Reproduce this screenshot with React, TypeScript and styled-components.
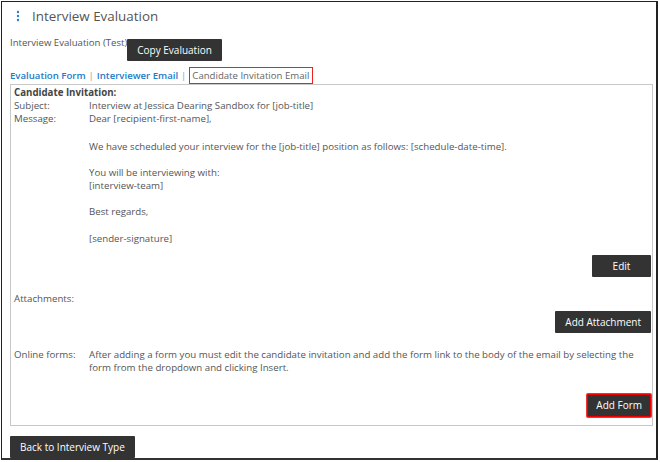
import React from "react";
import styled, { createGlobalStyle } from "styled-components";

const Global = createGlobalStyle`
  html, body { margin: 0; padding: 0; background: #fff; }
  body { font-family: "Open Sans", "Noto Sans", Arial, sans-serif; color: #555; }
  * { box-sizing: border-box; }
`;

const Frame = styled.div`
  margin: 1px 0 0 1px;
  width: 657px;
  height: 459px;
  border: 1px solid #222;
  border-right: 2px solid #222;
  border-bottom: 2px solid #333;
  padding: 0 3px 0 8px;
  display: flex;
  flex-direction: column;
`;

const Header = styled.div`
  display: flex;
  align-items: center;
  height: 30px;
  gap: 12px;
  padding-left: 6px;
  padding-bottom: 2px;
`;

const Title = styled.h1`
  margin: 0;
  font-size: 13.4px;
  font-weight: 400;
  color: #555;
`;

const SubRow = styled.div`
  display: flex;
  align-items: flex-start;
  height: 35px;
  padding-top: 4px;
`;

const SubText = styled.span`
  font-size: 9.6px;
  color: #555;
`;

const DarkButton = styled.button<{ $w?: number; $red?: boolean; $mt?: number }>`
  background: #333;
  color: #fff;
  border: ${(p) => (p.$red ? "1px solid #e00" : "none")};
  box-shadow: ${(p) => (p.$red ? "0 0 0 1px #e33" : "none")};
  border-radius: 1px;
  font-family: inherit;
  font-size: 10px;
  height: ${(p) => (p.$red ? 23 : 22)}px;
  padding: 0 ${(p) => (p.$red ? 8 : 10)}px;
  cursor: pointer;
  ${(p) => (p.$w ? `width: ${p.$w}px;` : "")}
  ${(p) => (p.$mt !== undefined ? `margin-top: ${p.$mt}px;` : "")}
`;

const Tabs = styled.div`
  display: flex;
  align-items: center;
  height: 17px;
  font-size: 9.6px;
`;

const TabLink = styled.a`
  color: #1b7bc7;
  font-weight: 600;
  text-decoration: none;
`;

const Sep = styled.span`
  color: #999;
  margin: 0 3px;
`;

const ActiveTab = styled.span`
  border: 1px solid #e22;
  padding: 0 3px 0 2px;
  color: #666;
  height: 17px;
  line-height: 15px;
`;

const Panel = styled.div`
  border: 1px solid #c8c8c8;
  height: 344px;
  padding: 1px 1px 0 3px;
  font-size: 9.7px;
  line-height: 13px;
  color: #555;
  display: flex;
  flex-direction: column;
`;

const Heading = styled.div`
  font-weight: 700;
  color: #444;
`;

const Row = styled.div<{ $mt?: number }>`
  display: grid;
  grid-template-columns: 75px 1fr;
  margin-top: ${(p) => p.$mt ?? 0}px;
`;

const Value = styled.div`
  color: #555;
`;

const Para = styled.p<{ $gap?: number }>`
  margin: 0;
  margin-top: ${(p) => p.$gap ?? 0}px;
`;

const RightAction = styled.div<{ $h: number }>`
  display: flex;
  justify-content: flex-end;
  align-items: flex-end;
  height: ${(p) => p.$h}px;
`;

const Footer = styled.div`
  padding-top: 8px;
`;

const Kebab = () => (
  <svg width="4" height="12" viewBox="0 0 4 12">
    <circle cx="2" cy="2" r="1.2" fill="#2a7fd0" />
    <circle cx="2" cy="6" r="1.2" fill="#2a7fd0" />
    <circle cx="2" cy="10" r="1.2" fill="#2a7fd0" />
  </svg>
);

export default function App() {
  return (
    <>
      <Global />
      <Frame>
        <Header>
          <Kebab />
          <Title>Interview Evaluation</Title>
        </Header>
        <SubRow>
          <SubText>Interview Evaluation (Test)</SubText>
          <DarkButton $mt={3}>Copy Evaluation</DarkButton>
        </SubRow>
        <Tabs>
          <TabLink href="#">Evaluation Form</TabLink>
          <Sep>|</Sep>
          <TabLink href="#">Interviewer Email</TabLink>
          <Sep>|</Sep>
          <ActiveTab>Candidate Invitation Email</ActiveTab>
        </Tabs>
        <Panel>
          <Heading>Candidate Invitation:</Heading>
          <Row>
            <span>Subject:</span>
            <Value>Interview at Jessica Dearing Sandbox for [job-title]</Value>
          </Row>
          <Row>
            <span>Message:</span>
            <Value>
              <Para>Dear [recipient-first-name],</Para>
              <Para $gap={15}>
                We have scheduled your interview for the [job-title] position as follows: [schedule-date-time].
              </Para>
              <Para $gap={13}>You will be interviewing with:</Para>
              <Para>[interview-team]</Para>
              <Para $gap={13}>Best regards,</Para>
              <Para $gap={14}>[sender-signature]</Para>
            </Value>
          </Row>
          <RightAction $h={32}>
            <DarkButton $w={59}>Edit</DarkButton>
          </RightAction>
          <Row $mt={15}>
            <span>Attachments:</span>
            <span />
          </Row>
          <RightAction $h={28}>
            <DarkButton>Add Attachment</DarkButton>
          </RightAction>
          <Row $mt={15}>
            <span>Online forms:</span>
            <Value>
              After adding a form you must edit the candidate invitation and add the form link to the body of the email by selecting the
              form from the dropdown and clicking Insert.
            </Value>
          </Row>
          <RightAction $h={43}>
            <DarkButton $red>Add Form</DarkButton>
          </RightAction>
        </Panel>
        <Footer>
          <DarkButton>Back to Interview Type</DarkButton>
        </Footer>
      </Frame>
    </>
  );
}
